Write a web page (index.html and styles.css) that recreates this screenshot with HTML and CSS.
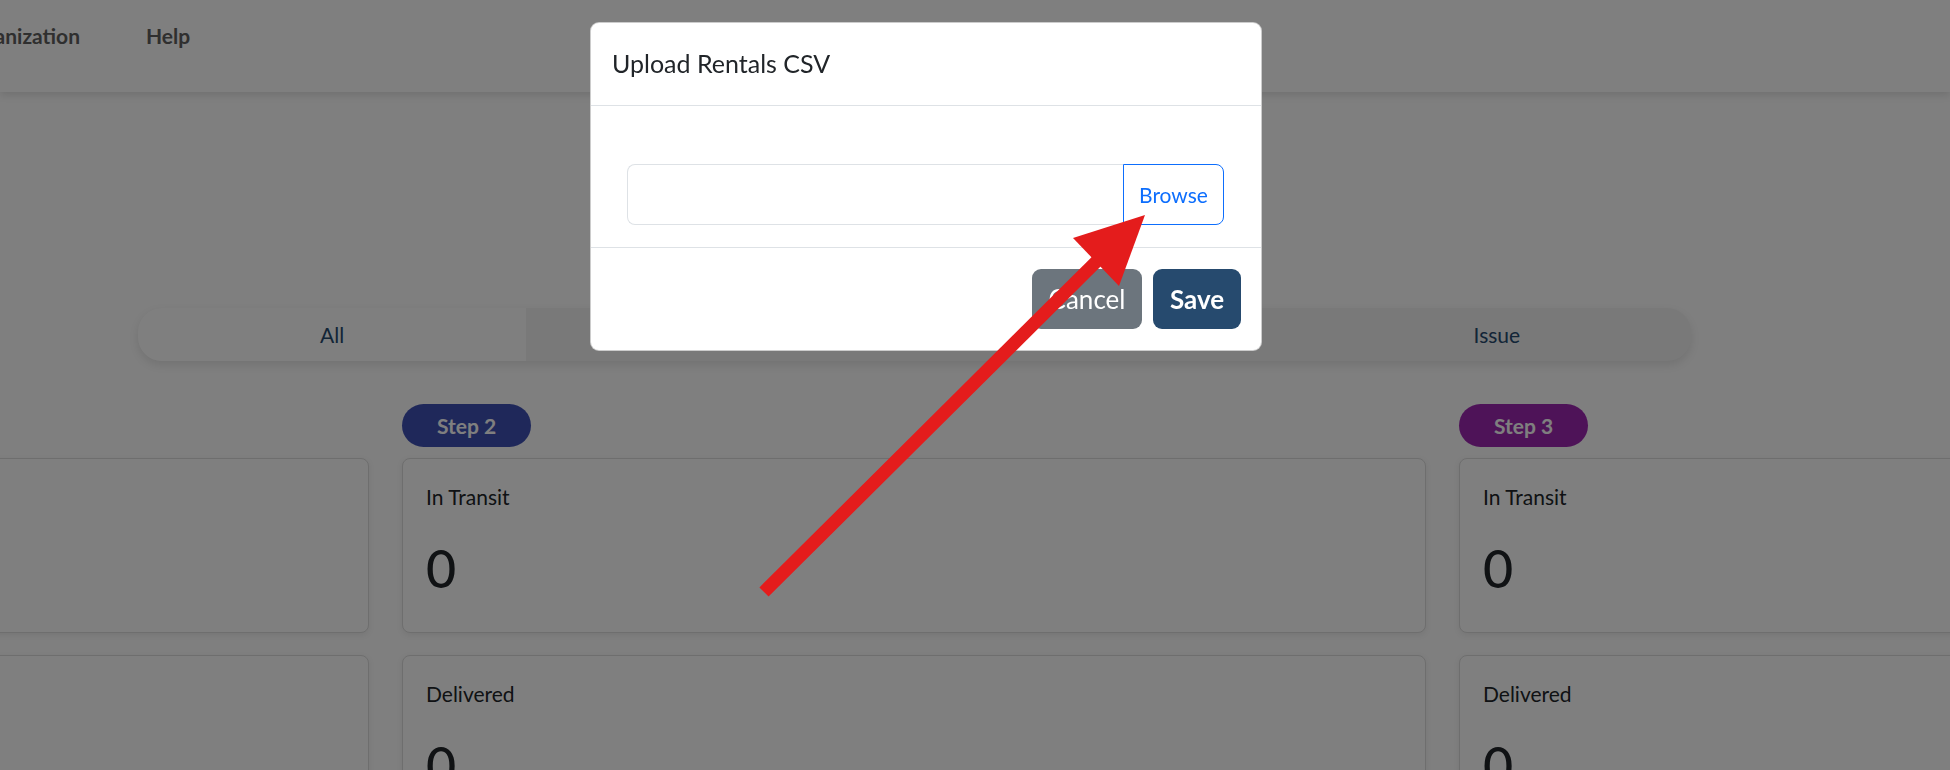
FILE: index.html
```html
<!DOCTYPE html>
<html lang="en">
<head>
    <meta charset="UTF-8">
    <meta name="viewport" content="width=device-width, initial-scale=1.0">
    <title>Rentals</title>
    <link rel="stylesheet" href="styles.css">
</head>
<body>
    <nav class="topnav">
        <ul class="nav-links">
            <li><a href="#">Organization</a></li>
            <li><a href="#">Help</a></li>
        </ul>
    </nav>

    <main class="page">
        <div class="status-tabs">
            <button class="tab active">All</button>
            <button class="tab">Pending</button>
            <button class="tab">Completed</button>
            <button class="tab">Issue</button>
        </div>

        <div class="steps">
            <section class="step-col">
                <span class="step-badge step-1">Step 1</span>
                <div class="stat-card">
                    <p class="stat-label">Requested</p>
                    <h1 class="stat-value">0</h1>
                </div>
                <div class="stat-card">
                    <p class="stat-label">Confirmed</p>
                    <h1 class="stat-value">0</h1>
                </div>
            </section>
            <section class="step-col">
                <span class="step-badge step-2">Step 2</span>
                <div class="stat-card">
                    <p class="stat-label">In Transit</p>
                    <h1 class="stat-value">0</h1>
                </div>
                <div class="stat-card">
                    <p class="stat-label">Delivered</p>
                    <h1 class="stat-value">0</h1>
                </div>
            </section>
            <section class="step-col">
                <span class="step-badge step-3">Step 3</span>
                <div class="stat-card">
                    <p class="stat-label">In Transit</p>
                    <h1 class="stat-value">0</h1>
                </div>
                <div class="stat-card">
                    <p class="stat-label">Delivered</p>
                    <h1 class="stat-value">0</h1>
                </div>
            </section>
        </div>
    </main>

    <div class="modal-backdrop"></div>

    <div class="modal">
        <div class="modal-header">
            <h5 class="modal-title">Upload Rentals CSV</h5>
        </div>
        <div class="modal-body">
            <div class="file-group">
                <input type="text" class="file-name" readonly>
                <label class="browse-btn">Browse</label>
            </div>
        </div>
        <div class="modal-footer">
            <button class="btn btn-cancel">Cancel</button>
            <button class="btn btn-save">Save</button>
        </div>
    </div>

    <!-- annotation arrow drawn on top of the screenshot -->
    <svg class="annotation" width="1950" height="770" viewBox="0 0 1950 770">
        <line x1="764" y1="592" x2="1100" y2="258" stroke="#e41c1c" stroke-width="13"/>
        <polygon points="1145,215 1073,238 1119,286" fill="#e41c1c"/>
    </svg>
</body>
</html>
```

FILE: styles.css
```css
body {
    margin: 0;
    font-family: Lato, "Open Sans", sans-serif;
    font-size: 21px;
    color: #212529;
    background-color: #fefefe;
    overflow: hidden;
    height: 770px;
}

.topnav {
    height: 92px;
    background: #ffffff;
    box-shadow: 0 3px 8px rgba(0, 0, 0, 0.12);
    position: relative;
}
.nav-links {
    list-style: none;
    margin: 0;
    padding: 20px 0 0 0;
    display: flex;
    gap: 66px;
    margin-left: -41px;
}
.nav-links a {
    color: #5e5e5e;
    font-weight: 700;
    text-decoration: none;
    line-height: 1.5;
}

.status-tabs {
    display: flex;
    margin: 216px 0 0 138px;
    width: 1553px;
    height: 53px;
    background: #f3f3f3;
    border-radius: 24px;
    overflow: hidden;
    box-shadow: 0 4px 10px rgba(0, 0, 0, 0.1);
}
.tab {
    flex: 1;
    border: none;
    background: transparent;
    font-family: inherit;
    font-size: 21px;
    color: #264a6e;
}
.tab.active {
    background: #ffffff;
}

.steps {
    display: grid;
    grid-template-columns: repeat(3, 1024px);
    column-gap: 33px;
    margin: 43px 0 0 -655px;
}
.step-col {
    display: flex;
    flex-direction: column;
    gap: 22px;
}
.step-badge {
    align-self: flex-start;
    width: 129px;
    height: 43px;
    border-radius: 22px;
    display: flex;
    align-items: center;
    justify-content: center;
    color: #ffffff;
    font-weight: 700;
    font-size: 21px;
    margin-bottom: -11px;
}
.step-1 { background: #2196f3; }
.step-2 { background: #3f51b5; }
.step-3 { background: #9c27b0; }

.stat-card {
    height: 175px;
    box-sizing: border-box;
    padding: 22px 23px;
    background: #ffffff;
    border: 1px solid #dcdcdc;
    border-radius: 8px;
    box-shadow: 0 2px 6px rgba(0, 0, 0, 0.08);
}
.stat-label {
    margin: 0;
    line-height: 1.5;
}
.stat-value {
    margin: 24px 0 0 0;
    font-size: 52px;
    font-weight: 500;
    line-height: 1.2;
}

.modal-backdrop {
    position: fixed;
    inset: 0;
    background: rgba(0, 0, 0, 0.5);
}

.modal {
    position: fixed;
    left: 590px;
    top: 22px;
    width: 672px;
    box-sizing: border-box;
    background: #ffffff;
    border: 1px solid rgba(0, 0, 0, 0.2);
    border-radius: 9px;
}
.modal-header {
    padding: 22px 21px;
    border-bottom: 1px solid #dee2e6;
}
.modal-title {
    margin: 0;
    font-size: 25px;
    font-weight: 400;
    line-height: 1.5;
}
.modal-body {
    padding: 58px 37px 22px 36px;
}
.file-group {
    display: flex;
    height: 61px;
}
.file-name {
    flex: 1;
    border: 1px solid #dee2e6;
    border-right: none;
    border-radius: 8px 0 0 8px;
    outline: none;
}
.browse-btn {
    width: 101px;
    box-sizing: border-box;
    display: flex;
    align-items: center;
    justify-content: center;
    border: 1px solid #0d6efd;
    border-radius: 0 8px 8px 0;
    color: #0d6efd;
    font-size: 21px;
}
.modal-footer {
    display: flex;
    justify-content: flex-end;
    gap: 11px;
    padding: 21px 20px 21px 21px;
    border-top: 1px solid #dee2e6;
}
.btn {
    height: 60px;
    border: none;
    border-radius: 9px;
    color: #ffffff;
    font-family: inherit;
    font-size: 26px;
}
.btn-cancel {
    width: 110px;
    background: #6c757d;
}
.btn-save {
    width: 88px;
    background: #264a6e;
    font-weight: 700;
}

.annotation {
    position: fixed;
    left: 0;
    top: 0;
    pointer-events: none;
}
```
